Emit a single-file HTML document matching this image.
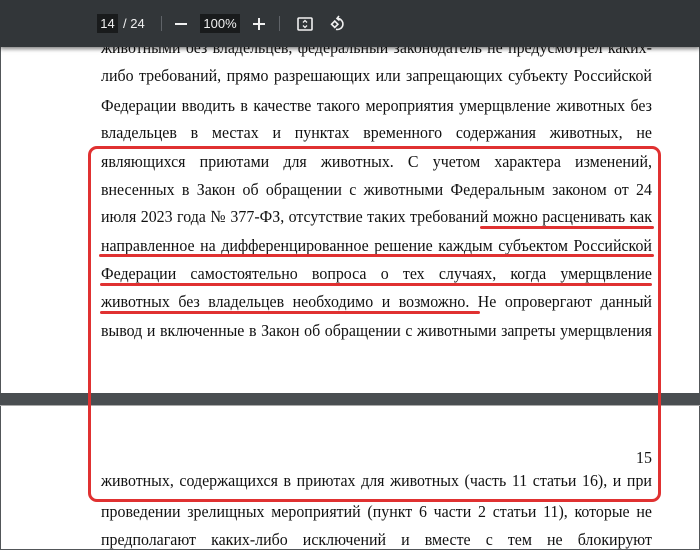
<!DOCTYPE html>
<html><head><meta charset="utf-8"><style>
html,body{margin:0;padding:0;width:700px;height:549px;overflow:hidden;background:#525659;}
.pg{position:absolute;left:1px;width:698px;background:#fff;}
.tb{position:absolute;left:0;top:0;width:700px;height:47px;background:#323639;box-shadow:0 2px 4px rgba(0,0,0,.5);z-index:5;font-family:"Liberation Sans",sans-serif;color:#f1f1f1;font-size:13px;}
.l{position:absolute;left:101px;width:588px;transform:scaleX(0.937);transform-origin:0 0;font-family:"Liberation Serif",serif;font-size:17px;line-height:20px;height:20px;color:#111;text-align:justify;text-align-last:justify;white-space:nowrap;}
.u{position:absolute;height:3px;background:#e03131;border-radius:2px;z-index:3;}
.box{position:absolute;left:88px;top:146px;width:567px;height:350px;border:3px solid #e03131;border-radius:9px;z-index:4;}
</style></head><body>
<div class="pg" style="top:0;height:393px;"></div>
<div class="pg" style="top:406px;height:143px;"></div>
<div style="position:absolute;left:0;top:393px;width:700px;height:13px;background:#4a4e51;"></div>
<div style="position:absolute;left:0;top:405px;width:700px;height:1px;background:#aaa;"></div>

<div class="tb">
 <div style="position:absolute;left:97px;top:14px;width:21px;height:19px;background:#191b1c;text-align:center;line-height:19px;">14</div>
 <div style="position:absolute;left:123px;top:14px;line-height:19px;">/ 24</div>
 <div style="position:absolute;left:161px;top:16px;width:1px;height:15px;background:#5f6368;"></div>
 <div style="position:absolute;left:175px;top:23px;width:12px;height:2px;background:#f1f1f1;"></div>
 <div style="position:absolute;left:200px;top:14px;width:40px;height:19px;background:#191b1c;text-align:center;line-height:19px;">100%</div>
 <div style="position:absolute;left:253px;top:23px;width:12px;height:2px;background:#f1f1f1;"></div>
 <div style="position:absolute;left:258px;top:18px;width:2px;height:12px;background:#f1f1f1;"></div>
 <div style="position:absolute;left:279px;top:16px;width:1px;height:15px;background:#5f6368;"></div>
 <svg style="position:absolute;left:296px;top:15px" width="18" height="18" viewBox="0 0 18 18" fill="none" stroke="#f1f1f1" stroke-width="1.6"><rect x="2" y="3" width="14" height="12" rx="1"/><path d="M7 7.5l2-2 2 2M7 10.5l2 2 2-2" stroke-width="1.3"/></svg>
 <svg style="position:absolute;left:328px;top:14px" width="20" height="20" viewBox="0 0 20 20" fill="none" stroke="#f1f1f1" stroke-width="1.6"><path d="M9 4.5a5.5 5.5 0 1 1-1 10.8"/><path d="M11 2l-2 2.5 2.5 2"/><rect x="4.5" y="8" width="4.5" height="4.5" transform="rotate(45 6.75 10.25)"/></svg>
</div>

<div class="l" style="top:38px">животными без владельцев, федеральный законодатель не предусмотрел каких-</div>
<div class="l" style="top:66px">либо требований, прямо разрешающих или запрещающих субъекту Российской</div>
<div class="l" style="top:96px">Федерации вводить в качестве такого мероприятия умерщвление животных без</div>
<div class="l" style="top:123px">владельцев в местах и пунктах временного содержания животных, не</div>
<div class="l" style="top:152px">являющихся приютами для животных. С учетом характера изменений,</div>
<div class="l" style="top:180px">внесенных в Закон об обращении с животными Федеральным законом от 24</div>
<div class="l" style="top:207px">июля 2023 года № 377-ФЗ, отсутствие таких требований можно расценивать как</div>
<div class="l" style="top:236px">направленное на дифференцированное решение каждым субъектом Российской</div>
<div class="l" style="top:264px">Федерации самостоятельно вопроса о тех случаях, когда умерщвление</div>
<div class="l" style="top:292px">животных без владельцев необходимо и возможно. Не опровергают данный</div>
<div class="l" style="top:321px">вывод и включенные в Закон об обращении с животными запреты умерщвления</div>
<div class="l" style="top:448px;text-align:right;text-align-last:right">15</div>
<div class="l" style="top:471px">животных, содержащихся в приютах для животных (часть 11 статьи 16), и при</div>
<div class="l" style="top:502px">проведении зрелищных мероприятий (пункт 6 части 2 статьи 11), которые не</div>
<div class="l" style="top:530px">предполагают каких-либо исключений и вместе с тем не блокируют</div>

<div class="u" style="left:480px;top:226px;width:174px"></div>
<div class="u" style="left:99px;top:254px;width:555px"></div>
<div class="u" style="left:100px;top:283px;width:552px"></div>
<div class="u" style="left:100px;top:311px;width:380px"></div>
<div class="box"></div>
</body></html>
